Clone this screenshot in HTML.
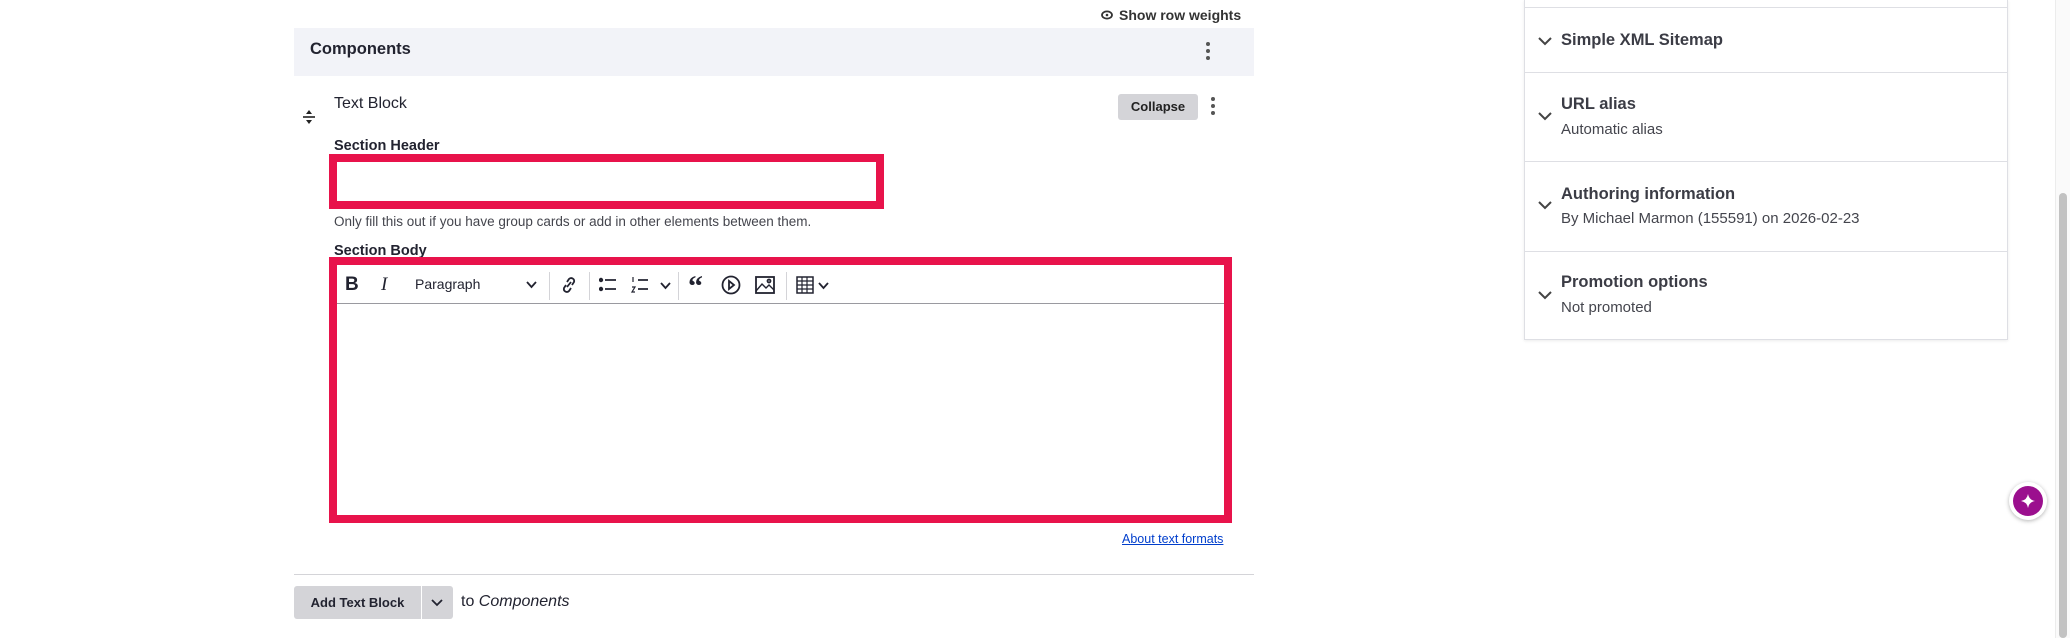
<!DOCTYPE html>
<html><head><meta charset="utf-8"><style>
*{box-sizing:border-box;margin:0;padding:0}
body{width:2070px;height:638px;background:#fff;font-family:"Liberation Sans",sans-serif;color:#222330;position:relative;overflow:hidden}
.a{position:absolute}
.ic{position:absolute;stroke:#222330;fill:none;stroke-width:1.8}
.sep{position:absolute;top:272px;width:1px;height:28px;background:#d4d4d8}
.st{position:absolute;left:1561px;font-size:16.5px;font-weight:bold;color:#3b3c45}
.ss{position:absolute;left:1561px;font-size:15px;color:#44454d}
.chev{position:absolute;left:1538px}
.hl{position:absolute;left:1524px;width:483px;height:1px;background:#dedfe4}
</style></head><body>
<svg class="a" style="left:1101px;top:10px" width="12" height="10" viewBox="0 0 12 10"><ellipse cx="6" cy="5" rx="5" ry="3.6" fill="none" stroke="#333" stroke-width="1.8"/><circle cx="6" cy="5" r="1.3" fill="#333"/></svg>
<div class="a" style="left:1119px;top:7px;font-size:14px;font-weight:bold;color:#333">Show row weights</div>
<div class="a" style="left:294px;top:28px;width:960px;height:48px;background:#f2f3f8"></div>
<div class="a" style="left:310px;top:40px;font-size:16.5px;font-weight:bold">Components</div>
<svg class="a" style="left:1205px;top:41px" width="6" height="20"><circle cx="3" cy="3" r="2" fill="#555"/><circle cx="3" cy="10" r="2" fill="#555"/><circle cx="3" cy="17" r="2" fill="#555"/></svg>
<svg class="a" style="left:302px;top:109px" width="14" height="16" viewBox="0 0 14 16"><path d="M7 1 L10 5 H4 Z M7 15 L10 11 H4 Z" fill="#222"/><path d="M1 8 H13" stroke="#222" stroke-width="1.6"/></svg>
<div class="a" style="left:334px;top:95px;font-size:16px;color:#222330">Text Block</div>
<div class="a" style="left:1118px;top:94px;width:80px;height:26px;background:#d4d4d8;border-radius:3px;font-size:13px;font-weight:bold;text-align:center;line-height:26px;color:#222">Collapse</div>
<svg class="a" style="left:1210px;top:96px" width="6" height="20"><circle cx="3" cy="3" r="2" fill="#555"/><circle cx="3" cy="10" r="2" fill="#555"/><circle cx="3" cy="17" r="2" fill="#555"/></svg>
<div class="a" style="left:334px;top:138px;font-size:14.5px;font-weight:bold">Section Header</div>
<div class="a" style="left:329px;top:154px;width:555px;height:55px;border:8px solid #e8134b;background:#fff"></div>
<div class="a" style="left:334px;top:214px;font-size:13.5px;color:#44454d">Only fill this out if you have group cards or add in other elements between them.</div>
<div class="a" style="left:334px;top:243px;font-size:14.5px;font-weight:bold">Section Body</div>
<div class="a" style="left:329px;top:257px;width:903px;height:266px;border:8px solid #e8134b;background:#fff"></div>
<div class="a" style="left:337px;top:303px;width:887px;height:1px;background:#9a9aa0"></div>
<div class="a" style="left:345px;top:274px;font-size:19px;font-weight:bold">B</div>
<div class="a" style="left:381px;top:274px;font-size:19px;font-style:italic;font-family:'Liberation Serif',serif">I</div>
<div class="a" style="left:415px;top:276px;font-size:14px">Paragraph</div>
<svg class="ic" style="left:526px;top:281px" width="11" height="8"><path d="M1 1 L5.5 6 L10 1"/></svg>
<div class="sep" style="left:549px"></div>
<svg class="ic" style="left:561px;top:276px" width="16" height="18" viewBox="0 0 16 18"><path d="M6 11 L10 6 M5 9 L3 12 a3 3 0 0 0 5 3 L10 12 M11 9 L13 6 a3 3 0 0 0 -5 -3 L6 6"/></svg>
<div class="sep" style="left:589px"></div>
<svg class="ic" style="left:599px;top:277px" width="18" height="16" viewBox="0 0 18 16"><circle cx="2" cy="3" r="1.3" fill="#222"/><circle cx="2" cy="12" r="1.3" fill="#222"/><path d="M6 3 H17 M6 12 H17"/></svg>
<svg class="ic" style="left:631px;top:276px" width="18" height="18" viewBox="0 0 18 18"><path d="M2 1 V6 M1 11 H4 L1 16 H4" stroke-width="1.2"/><path d="M7 4 H17 M7 13 H17"/></svg>
<svg class="ic" style="left:660px;top:282px" width="11" height="8"><path d="M1 1 L5.5 6 L10 1"/></svg>
<div class="sep" style="left:678px"></div>
<div class="a" style="left:688px;top:270px;font-size:30px;font-weight:bold;font-family:'Liberation Serif',serif">“</div>
<svg class="ic" style="left:721px;top:275px" width="20" height="20" viewBox="0 0 20 20"><circle cx="10" cy="10" r="8.5"/><path d="M8 6 L13 10 L8 14 Z"/></svg>
<svg class="ic" style="left:755px;top:276px" width="20" height="18" viewBox="0 0 20 18"><rect x="1" y="1" width="18" height="16"/><path d="M1 15 L7 8 L11 12 L14 9 L19 14" stroke-width="1.4"/><circle cx="14" cy="5" r="1.5"/></svg>
<div class="sep" style="left:786px"></div>
<svg class="ic" style="left:796px;top:276px" width="18" height="18" viewBox="0 0 18 18"><rect x="1" y="1" width="16" height="16" stroke-width="1.5"/><path d="M1 5 H17 M1 9 H17 M1 13 H17 M6 1 V17 M11 1 V17" stroke-width="1.2"/></svg>
<svg class="ic" style="left:818px;top:282px" width="11" height="8"><path d="M1 1 L5.5 6 L10 1"/></svg>
<div class="a" style="left:1122px;top:532px;font-size:12.5px;color:#003ecc;text-decoration:underline">About text formats</div>
<div class="a" style="left:294px;top:574px;width:960px;height:1px;background:#d4d4d8"></div>
<div class="a" style="left:294px;top:586px;width:127px;height:33px;background:#d4d4d8;border-radius:3px 0 0 3px;font-size:13px;font-weight:bold;text-align:center;line-height:33px">Add Text Block</div>
<div class="a" style="left:422px;top:586px;width:31px;height:33px;background:#d4d4d8;border-radius:0 3px 3px 0"></div>
<svg class="ic" style="left:431px;top:599px" width="12" height="8"><path d="M1 1 L6 6 L11 1"/></svg>
<div class="a" style="left:461px;top:593px;font-size:16px">to <i>Components</i></div>
<div class="a" style="left:1524px;top:0;width:484px;height:340px;border:1px solid #dedfe4;border-top:none;box-shadow:0 1px 3px rgba(0,0,0,.08)"></div>
<div class="hl" style="top:7px"></div>
<div class="hl" style="top:72px"></div>
<div class="hl" style="top:161px"></div>
<div class="hl" style="top:251px"></div>
<svg class="chev" style="top:37px" width="14" height="9"><path d="M1 1 L7 7 L13 1" stroke="#444" stroke-width="2" fill="none"/></svg>
<div class="st" style="top:31px">Simple XML Sitemap</div>
<svg class="chev" style="top:112px" width="14" height="9"><path d="M1 1 L7 7 L13 1" stroke="#444" stroke-width="2" fill="none"/></svg>
<div class="st" style="top:95px">URL alias</div>
<div class="ss" style="top:121px">Automatic alias</div>
<svg class="chev" style="top:201px" width="14" height="9"><path d="M1 1 L7 7 L13 1" stroke="#444" stroke-width="2" fill="none"/></svg>
<div class="st" style="top:185px">Authoring information</div>
<div class="ss" style="top:210px">By Michael Marmon (155591) on 2026-02-23</div>
<svg class="chev" style="top:291px" width="14" height="9"><path d="M1 1 L7 7 L13 1" stroke="#444" stroke-width="2" fill="none"/></svg>
<div class="st" style="top:273px">Promotion options</div>
<div class="ss" style="top:299px">Not promoted</div>
<div class="a" style="left:2055px;top:0;width:15px;height:638px;background:#fafafa;border-left:1px solid #ececec"></div>
<div class="a" style="left:2059px;top:193px;width:8px;height:445px;background:#c2c2c2;border-radius:4px"></div>
<div class="a" style="left:2009px;top:482px;width:38px;height:38px;border-radius:50%;background:#fff;box-shadow:0 1px 4px rgba(0,0,0,.3)"></div>
<div class="a" style="left:2013px;top:486px;width:30px;height:30px;border-radius:50%;background:#9b0f8e"></div>
<svg class="a" style="left:2020px;top:493px" width="16" height="16" viewBox="0 0 16 16"><path d="M8 1 Q9 7 15 8 Q9 9 8 15 Q7 9 1 8 Q7 7 8 1Z" fill="#fff"/></svg>
</body></html>
